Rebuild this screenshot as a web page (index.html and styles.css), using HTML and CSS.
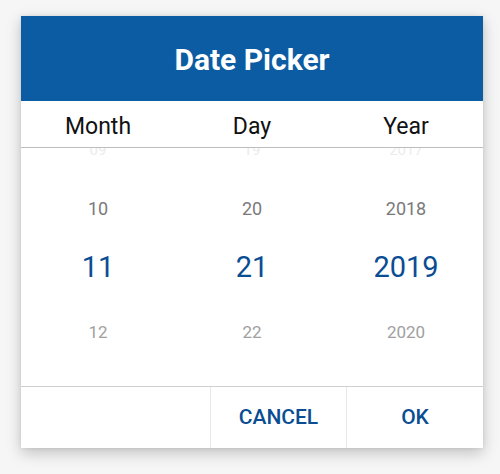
FILE: index.html
```html
<!DOCTYPE html>
<html>
<head>
<meta charset="utf-8">
<link rel="stylesheet" href="styles.css">
</head>
<body>
<div class="dialog">
  <div class="header">Date Picker</div>
  <div class="labels">
    <div class="label">Month</div>
    <div class="label">Day</div>
    <div class="label">Year</div>
  </div>
  <div class="wheel">
    <div class="col">
      <div class="item far">09</div>
      <div class="item near">10</div>
      <div class="item sel">11</div>
      <div class="item next">12</div>
    </div>
    <div class="col">
      <div class="item far">19</div>
      <div class="item near">20</div>
      <div class="item sel">21</div>
      <div class="item next">22</div>
    </div>
    <div class="col">
      <div class="item far">2017</div>
      <div class="item near">2018</div>
      <div class="item sel">2019</div>
      <div class="item next">2020</div>
    </div>
  </div>
  <div class="actions">
    <div class="btn blank"></div>
    <div class="btn">CANCEL</div>
    <div class="btn">OK</div>
  </div>
</div>
</body>
</html>
```
FILE: styles.css
```css
html, body {
  margin: 0;
  padding: 0;
}
body {
  background: #f6f6f6;
  font-family: Roboto, "Liberation Sans", sans-serif;
  padding: 16px 17px 0 21px;
  height: 474px;
  box-sizing: border-box;
}
.dialog {
  width: 462px;
  background: #fff;
  box-shadow: 0 5px 14px rgba(0, 0, 0, 0.22), 0 0 4px rgba(0, 0, 0, 0.08);
}
.header {
  height: 85px;
  background: #0b5ca2;
  color: #fff;
  font-weight: 700;
  font-size: 30px;
  display: flex;
  align-items: center;
  justify-content: center;
  padding-top: 2px;
  box-sizing: border-box;
}
.labels {
  height: 46px;
  display: grid;
  grid-template-columns: repeat(3, 1fr);
  border-bottom: 1px solid #bdbdbd;
  box-sizing: content-box;
}
.label {
  display: flex;
  align-items: center;
  justify-content: center;
  font-size: 23px;
  color: #111;
  padding-top: 4px;
}
.wheel {
  height: 238px;
  overflow: hidden;
  display: grid;
  grid-template-columns: repeat(3, 1fr);
}
.col {
  margin-top: -27px;
  display: flex;
  flex-direction: column;
}
.item {
  text-align: center;
  display: flex;
  align-items: center;
  justify-content: center;
}
.far {
  height: 58px;
  font-size: 15px;
  color: #ececec;
}
.near {
  height: 58px;
  font-size: 18px;
  color: #7a7a7a;
}
.sel {
  height: 60px;
  font-size: 29px;
  color: #0a4d93;
}
.next {
  height: 70px;
  font-size: 17px;
  color: #a0a0a0;
}
.actions {
  height: 61px;
  border-top: 1px solid #cfcfcf;
  display: grid;
  grid-template-columns: 189px 136px 137px;
}
.btn {
  display: flex;
  align-items: center;
  justify-content: center;
  font-size: 21px;
  font-weight: 500;
  color: #0a4d93;
  border-left: 1px solid #e8e8e8;
  padding-bottom: 1px;
}
.btn.blank {
  border-left: none;
}
```
